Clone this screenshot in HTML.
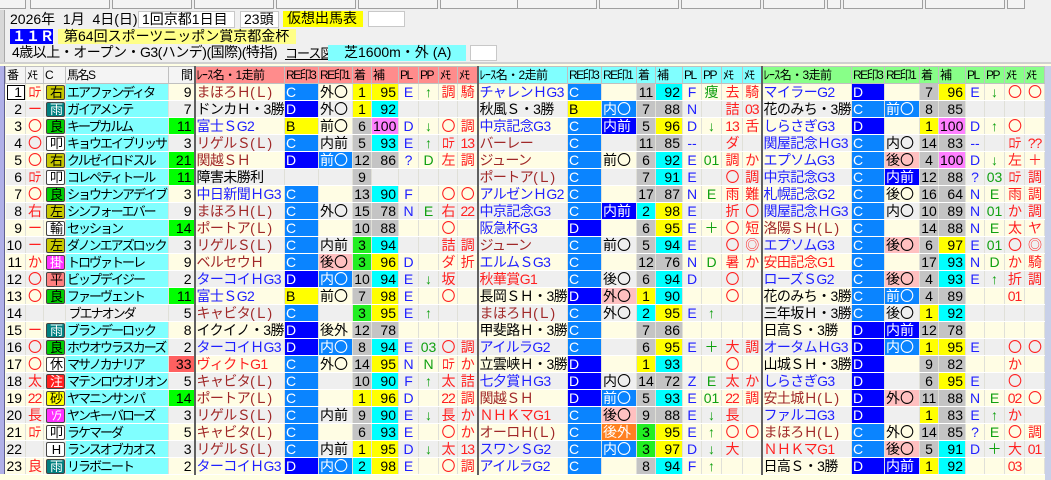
<!DOCTYPE html>
<html><head><meta charset="utf-8">
<style>
*{margin:0;padding:0;box-sizing:border-box}
body{width:1051px;height:480px;overflow:hidden;background:#ffffe4;font-family:"Liberation Sans","Noto Sans CJK JP",sans-serif;font-size:14px;position:relative}
.top{position:absolute;left:0;top:0;width:1051px;height:64px;background:#f0f0f0;border-bottom:2px solid #d0d0d0}
.tab{position:absolute;top:-2px;height:11px;border:1px solid #a0a0a0;background:#f4f4f4}
.gut{position:absolute;left:0;width:5px;background:#b0b0e8;border-right:1px solid #606090}
.ab{position:absolute;line-height:15px;white-space:nowrap}
.wb{background:#fff;border:1px solid #c8c8c8}
table{position:absolute;left:5px;top:66px;width:1039px;border-collapse:collapse;table-layout:fixed}
td{height:17px;max-height:17px;padding:0 1px;white-space:nowrap;overflow:hidden;border-right:1px solid #e0e0d8;border-bottom:1px solid #fff;line-height:15px;font-size:14px}
thead td{background:#f4f4f4;border:1px solid #c0c0c0;font-size:12px;letter-spacing:-1.5px;padding:0 1px}
thead td.p{background:#ff8c8c}thead td.q{background:#80ffff}thead td.s{background:#88ff88}
tbody tr:nth-child(odd){background:#fffde4}
tbody tr:nth-child(even){background:#efefef}
td:nth-child(1){text-align:right;padding-right:3px}
td:nth-child(2){color:#ff2020;text-align:center;letter-spacing:-1px}
td:nth-child(5),td:nth-child(10),td:nth-child(19),td:nth-child(28){text-align:right;padding-right:2px}
td:nth-child(9),td:nth-child(18),td:nth-child(27){text-align:center}
td:nth-child(11),td:nth-child(20),td:nth-child(29){color:#2020ff;text-align:center}
td:nth-child(12),td:nth-child(21),td:nth-child(30){color:#10a010;text-align:center}
td:nth-child(13),td:nth-child(14),td:nth-child(22),td:nth-child(23),td:nth-child(31),td:nth-child(32){color:#ff2020;text-align:center;letter-spacing:-1px}
thead td{color:#000 !important;text-align:left !important}
td.rn{border-left:2px solid #606060;letter-spacing:-0.6px}
tbody td.nm{background:#80ffff;font-size:13px;letter-spacing:-2px}
tbody td.nn{font-size:13px;letter-spacing:-2px}
.y{background:#ffff00}.c{background:#00ffff}.g{background:#22ee22}.gr{background:#c4c4c4}.m{background:#ff80ff}
.gn{background:#00ff00}.rd{background:#ff6060}
.C{background:#0a84ff;color:#fff}.D{background:#0000ff;color:#fff}.B{background:#ffff00}
.pk{background:#ffc0c0}.bl{background:#0a84ff;color:#fff}.db{background:#0000ff;color:#fff}.or{background:#ff8020;color:#fff}
.tb{color:#2020ff}.tm{color:#a02828}.tr{color:#ff2020}.tk{color:#000}
b{display:inline-block;width:19px;height:15px;font-weight:normal;font-size:13px;line-height:14px;text-align:center;border-radius:2px;border:1px solid #444;vertical-align:top;margin-left:1px;overflow:hidden;letter-spacing:-2px}
.ol{background:#c8c800}.te{background:#008080;color:#fff}.gb{background:#00cc00}.wh{background:#fff}.mg{background:#ff30ff;color:#fff}.sa{background:#ff8080}.re{background:#ff2020;color:#fff}.ye{background:#ffff00}
.sel{outline:1px solid #000;outline-offset:-2px;background:#fff}
.rs{position:absolute;left:1045px;top:66px;width:6px;height:414px;background:#c8d0e8}
</style></head><body>
<div class="top">
<div class="tab" style="left:-2px;width:28px"></div><div class="tab" style="left:30px;width:80px"></div><div class="tab" style="left:112px;width:80px"></div><div class="tab" style="left:194px;width:80px"></div><div class="tab" style="left:276px;width:80px"></div><div class="tab" style="left:358px;width:80px"></div><div class="tab" style="left:440px;width:80px"></div><div class="tab" style="left:517px;width:80px"></div><div class="tab" style="left:599px;width:80px"></div><div class="tab" style="left:681px;width:80px"></div><div class="tab" style="left:763px;width:62px"></div><div class="tab" style="left:827px;width:14px"></div><div class="tab" style="left:843px;width:80px"></div><div class="tab" style="left:925px;width:80px"></div><div class="tab" style="left:1007px;width:18px"></div>
<div class="gut" style="top:10px;height:52px;background:#d8d8d8;border-right:1px solid #aaa"></div>
<div class="ab" style="left:10px;top:12px">2026年&nbsp; 1月&nbsp; 4日(日)</div>
<div class="ab wb" style="left:138px;top:11px;width:97px;padding-left:3px">1回京都1日目</div>
<div class="ab wb" style="left:240px;top:11px;width:39px;padding-left:3px">23頭</div>
<div class="ab" style="left:283px;top:11px;width:80px;background:#ffff00;padding-left:4px;height:16px">仮想出馬表</div>
<div class="ab wb" style="left:368px;top:11px;width:37px;height:16px"></div>
<div class="ab" style="left:10px;top:29px;width:43px;background:#0000ff;color:#fff;padding-left:2px;font-weight:bold;height:15px">１１Ｒ</div>
<div class="ab" style="left:58px;top:29px;width:238px;background:#ffff88;padding-left:6px;height:15px">第64回スポーツニッポン賞京都金杯</div>
<div class="ab" style="left:12px;top:45px;letter-spacing:-0.5px">4歳以上・オープン・G3(ハンデ)(国際)(特指)</div>
<div class="ab" style="left:285px;top:46px;text-decoration:underline;font-size:13px;letter-spacing:-1px">コース図</div>
<div class="ab" style="left:328px;top:45px;width:138px;height:16px;background:#80ffff;padding-left:16px">芝1600m・外 (A)</div>
<div class="ab wb" style="left:470px;top:45px;width:27px;height:16px"></div>
</div>
<div class="gut" style="top:66px;height:408px"></div>
<div class="rs"></div>
<table>
<colgroup><col style="width:20px"><col style="width:18px"><col style="width:22px"><col style="width:103px"><col style="width:26px">
<col style="width:90px"><col style="width:34px"><col style="width:34px"><col style="width:19px"><col style="width:27px"><col style="width:20px"><col style="width:20px"><col style="width:19px"><col style="width:20px">
<col style="width:90px"><col style="width:34px"><col style="width:35px"><col style="width:19px"><col style="width:27px"><col style="width:19px"><col style="width:20px"><col style="width:21px"><col style="width:19px">
<col style="width:90px"><col style="width:33px"><col style="width:35px"><col style="width:19px"><col style="width:27px"><col style="width:19px"><col style="width:20px"><col style="width:20px"><col style="width:20px"></colgroup>
<thead><tr><td>番</td><td>ﾒﾓ</td><td>C</td><td>馬名S</td><td style="text-align:right!important">間</td>
<td class="p rn">ﾚｰｽ名・1走前</td><td class="p">RE印3</td><td class="p">RE印1</td><td class="p">着</td><td class="p">補</td><td class="p">PL</td><td class="p">PP</td><td class="p">ﾒﾓ</td><td class="p">ﾒﾓ</td>
<td class="q rn">ﾚｰｽ名・2走前</td><td class="q">RE印3</td><td class="q">RE印1</td><td class="q">着</td><td class="q">補</td><td class="q">PL</td><td class="q">PP</td><td class="q">ﾒﾓ</td><td class="q">ﾒﾓ</td>
<td class="s rn">ﾚｰｽ名・3走前</td><td class="s">RE印3</td><td class="s">RE印1</td><td class="s">着</td><td class="s">補</td><td class="s">PL</td><td class="s">PP</td><td class="s">ﾒﾓ</td><td class="s">ﾒﾓ</td></tr></thead>
<tbody>
<tr><td class="sel">1</td><td>ﾛﾃ</td><td><b class="ol">右</b></td><td class="nm">エアファンディタ</td><td>9</td><td class="rn tm">まほろＨ(Ｌ)</td><td class="C">C</td><td>外〇</td><td class="y">1</td><td class="y">95</td><td>E</td><td>↑</td><td>調</td><td>騎</td><td class="rn tb">チャレンＨG3</td><td class="C">C</td><td></td><td class="gr">11</td><td class="c">92</td><td>F</td><td>痩</td><td>去</td><td>騎</td><td class="rn tb">マイラーG2</td><td class="D">D</td><td></td><td class="gr">7</td><td class="y">96</td><td>E</td><td>↓</td><td>〇</td><td>〇</td></tr>
<tr><td>2</td><td>ー</td><td><b class="te">雨</b></td><td class="nm">ガイアメンテ</td><td>7</td><td class="rn tk">ドンカＨ・3勝</td><td class="D">D</td><td>外〇</td><td class="y">1</td><td class="c">92</td><td></td><td></td><td></td><td></td><td class="rn tk">秋風Ｓ・3勝</td><td class="B">B</td><td class="bl">内〇</td><td class="gr">7</td><td class="gr">88</td><td>N</td><td></td><td>詰</td><td>03</td><td class="rn tk">花のみち・3勝</td><td class="C">C</td><td class="bl">前〇</td><td class="gr">8</td><td class="gr">85</td><td></td><td></td><td></td><td></td></tr>
<tr><td>3</td><td>〇</td><td><b class="gb">良</b></td><td class="nm">キープカルム</td><td class="gn">11</td><td class="rn tb">富士ＳG2</td><td class="B">B</td><td>前〇</td><td class="gr">6</td><td class="m">100</td><td>D</td><td>↓</td><td>〇</td><td>調</td><td class="rn tb">中京記念G3</td><td class="C">C</td><td class="db">内前</td><td class="gr">5</td><td class="y">96</td><td>D</td><td>↓</td><td>13</td><td>舌</td><td class="rn tb">しらさぎG3</td><td class="D">D</td><td></td><td class="y">1</td><td class="m">100</td><td>D</td><td>↑</td><td>〇</td><td></td></tr>
<tr><td>4</td><td>〇</td><td><b class="wh">叩</b></td><td class="nm">キョウエイブリッサ</td><td>3</td><td class="rn tm">リゲルＳ(Ｌ)</td><td class="C">C</td><td>内前</td><td class="gr">5</td><td class="c">93</td><td>E</td><td>↑</td><td>ﾛﾃ</td><td>13</td><td class="rn tm">バーレー</td><td class="C">C</td><td></td><td class="gr">11</td><td class="gr">85</td><td>--</td><td></td><td>ダ</td><td></td><td class="rn tb">関屋記念ＨG3</td><td class="C">C</td><td>内〇</td><td class="gr">14</td><td class="gr">83</td><td>--</td><td></td><td>ﾛﾃ</td><td>??</td></tr>
<tr><td>5</td><td>〇</td><td><b class="ol">右</b></td><td class="nm">クルゼイロドスル</td><td class="gn">21</td><td class="rn tm">関越ＳＨ</td><td class="D">D</td><td class="bl">前〇</td><td class="gr">12</td><td class="gr">86</td><td>?</td><td>D</td><td>左</td><td>調</td><td class="rn tm">ジューン</td><td class="C">C</td><td>前〇</td><td class="gr">6</td><td class="c">92</td><td>E</td><td>01</td><td>調</td><td>か</td><td class="rn tb">エプソムG3</td><td class="C">C</td><td class="pk">後〇</td><td class="gr">4</td><td class="m">100</td><td>D</td><td>↓</td><td>左</td><td>＋</td></tr>
<tr><td>6</td><td>ﾛﾃ</td><td><b class="wh">叩</b></td><td class="nm">コレペティトール</td><td class="gn">11</td><td class="rn tk">障害未勝利</td><td></td><td></td><td class="gr">9</td><td></td><td></td><td></td><td></td><td></td><td class="rn tm">ポートア(Ｌ)</td><td class="C">C</td><td></td><td class="gr">7</td><td class="c">91</td><td>E</td><td></td><td>〇</td><td>調</td><td class="rn tb">中京記念G3</td><td class="C">C</td><td class="db">内前</td><td class="gr">12</td><td class="gr">88</td><td>?</td><td>03</td><td>ﾛﾃ</td><td>調</td></tr>
<tr><td>7</td><td>〇</td><td><b class="gb">良</b></td><td class="nm">ショウナンアデイブ</td><td>3</td><td class="rn tb">中日新聞ＨG3</td><td class="C">C</td><td></td><td class="gr">13</td><td class="c">90</td><td>F</td><td></td><td>〇</td><td>〇</td><td class="rn tb">アルゼンＨG2</td><td class="C">C</td><td></td><td class="gr">17</td><td class="gr">87</td><td>N</td><td>E</td><td>雨</td><td>難</td><td class="rn tb">札幌記念G2</td><td class="C">C</td><td>後〇</td><td class="gr">16</td><td class="gr">64</td><td>N</td><td>E</td><td>雨</td><td>調</td></tr>
<tr><td>8</td><td>右</td><td><b class="ol">左</b></td><td class="nm">シンフォーエバー</td><td>9</td><td class="rn tm">まほろＨ(Ｌ)</td><td class="C">C</td><td>外〇</td><td class="gr">15</td><td class="gr">78</td><td>N</td><td>E</td><td>右</td><td>22</td><td class="rn tb">中京記念G3</td><td class="C">C</td><td class="db">内前</td><td class="c">2</td><td class="y">98</td><td>E</td><td></td><td>折</td><td>〇</td><td class="rn tb">関屋記念ＨG3</td><td class="C">C</td><td>内〇</td><td class="gr">10</td><td class="gr">89</td><td>N</td><td>01</td><td>か</td><td>調</td></tr>
<tr><td>9</td><td>ー</td><td><b class="wh">輸</b></td><td class="nm">セッション</td><td class="gn">14</td><td class="rn tm">ポートア(Ｌ)</td><td class="C">C</td><td></td><td class="gr">10</td><td class="gr">88</td><td></td><td></td><td>〇</td><td></td><td class="rn tb">阪急杯G3</td><td class="D">D</td><td></td><td class="gr">6</td><td class="y">95</td><td>E</td><td>＋</td><td>〇</td><td>短</td><td class="rn tm">洛陽ＳＨ(Ｌ)</td><td class="C">C</td><td></td><td class="gr">14</td><td class="gr">88</td><td>N</td><td>E</td><td>太</td><td>ヤ</td></tr>
<tr><td>10</td><td>ー</td><td><b class="ol">左</b></td><td class="nm">ダノンエアズロック</td><td>3</td><td class="rn tm">リゲルＳ(Ｌ)</td><td class="C">C</td><td>内前</td><td class="g">3</td><td class="c">94</td><td></td><td></td><td>詰</td><td>調</td><td class="rn tm">ジューン</td><td class="C">C</td><td>前〇</td><td class="gr">5</td><td class="c">94</td><td>E</td><td></td><td>〇</td><td>◎</td><td class="rn tb">エプソムG3</td><td class="C">C</td><td class="pk">後〇</td><td class="gr">6</td><td class="y">97</td><td>E</td><td>01</td><td>〇</td><td>◎</td></tr>
<tr><td>11</td><td>か</td><td><b class="mg">掛</b></td><td class="nm">トロヴァトーレ</td><td>9</td><td class="rn tm">ベルセウＨ</td><td class="C">C</td><td class="pk">後〇</td><td class="g">3</td><td class="y">96</td><td>D</td><td></td><td>ダ</td><td>折</td><td class="rn tb">エルムＳG3</td><td class="C">C</td><td></td><td class="gr">12</td><td class="gr">76</td><td>N</td><td>D</td><td>暑</td><td>か</td><td class="rn tr">安田記念G1</td><td class="C">C</td><td></td><td class="gr">17</td><td class="c">93</td><td>N</td><td>D</td><td>か</td><td>騎</td></tr>
<tr><td>12</td><td>〇</td><td><b class="sa">平</b></td><td class="nm">ビップデイジー</td><td>2</td><td class="rn tb">ターコイＨG3</td><td class="D">D</td><td class="bl">内〇</td><td class="gr">10</td><td class="c">94</td><td>E</td><td>↓</td><td>坂</td><td></td><td class="rn tr">秋華賞G1</td><td class="C">C</td><td>後〇</td><td class="gr">6</td><td class="c">94</td><td>D</td><td></td><td>〇</td><td></td><td class="rn tb">ローズＳG2</td><td class="C">C</td><td class="pk">後〇</td><td class="gr">4</td><td class="c">93</td><td>E</td><td>↑</td><td>折</td><td>調</td></tr>
<tr><td>13</td><td>〇</td><td><b class="gb">良</b></td><td class="nm">ファーヴェント</td><td class="gn">11</td><td class="rn tb">富士ＳG2</td><td class="B">B</td><td>前〇</td><td class="gr">7</td><td class="y">98</td><td>E</td><td></td><td>〇</td><td></td><td class="rn tk">長岡ＳＨ・3勝</td><td class="D">D</td><td class="pk">外〇</td><td class="y">1</td><td class="c">90</td><td></td><td></td><td>〇</td><td></td><td class="rn tk">花のみち・3勝</td><td class="C">C</td><td class="bl">前〇</td><td class="gr">4</td><td class="gr">89</td><td></td><td></td><td>01</td><td></td></tr>
<tr><td>14</td><td></td><td></td><td class="nn">&nbsp;ブエナオンダ</td><td>5</td><td class="rn tm">キャビタ(Ｌ)</td><td class="C">C</td><td></td><td class="g">3</td><td class="y">95</td><td>E</td><td>↑</td><td></td><td></td><td class="rn tm">まほろＨ(Ｌ)</td><td class="C">C</td><td>外〇</td><td class="c">2</td><td class="y">95</td><td>E</td><td>↑</td><td></td><td></td><td class="rn tk">三年坂Ｈ・3勝</td><td class="C">C</td><td>後〇</td><td class="y">1</td><td class="c">92</td><td></td><td></td><td></td><td></td></tr>
<tr><td>15</td><td>ー</td><td><b class="te">雨</b></td><td class="nm">ブランデーロック</td><td>8</td><td class="rn tk">イクイノ・3勝</td><td class="D">D</td><td>後外</td><td class="gr">12</td><td class="gr">78</td><td></td><td></td><td></td><td></td><td class="rn tk">甲斐路Ｈ・3勝</td><td class="C">C</td><td></td><td class="gr">7</td><td class="gr">86</td><td></td><td></td><td></td><td></td><td class="rn tk">日高Ｓ・3勝</td><td class="D">D</td><td class="db">内前</td><td class="gr">12</td><td class="gr">78</td><td></td><td></td><td></td><td></td></tr>
<tr><td>16</td><td>〇</td><td><b class="gb">良</b></td><td class="nm">ホウオウラスカーズ</td><td>2</td><td class="rn tb">ターコイＨG3</td><td class="D">D</td><td class="bl">内〇</td><td class="gr">8</td><td class="c">94</td><td>E</td><td>03</td><td>〇</td><td>調</td><td class="rn tb">アイルラG2</td><td class="C">C</td><td></td><td class="gr">6</td><td class="y">95</td><td>E</td><td>＋</td><td>大</td><td>調</td><td class="rn tb">オータムＨG3</td><td class="D">D</td><td class="bl">内〇</td><td class="y">1</td><td class="y">95</td><td>E</td><td></td><td>〇</td><td>〇</td></tr>
<tr><td>17</td><td>〇</td><td><b class="wh">休</b></td><td class="nm">マサノカナリア</td><td class="rd">33</td><td class="rn tr">ヴィクトG1</td><td class="C">C</td><td>外〇</td><td class="gr">14</td><td class="y">95</td><td>N</td><td>N</td><td>ﾛﾃ</td><td>か</td><td class="rn tk">立雲峡Ｈ・3勝</td><td class="D">D</td><td></td><td class="y">1</td><td class="c">93</td><td></td><td></td><td>〇</td><td></td><td class="rn tk">山城ＳＨ・3勝</td><td class="D">D</td><td></td><td class="gr">9</td><td class="gr">82</td><td></td><td></td><td>か</td><td></td></tr>
<tr><td>18</td><td>太</td><td><b class="re">注</b></td><td class="nm">マテンロウオリオン</td><td>5</td><td class="rn tm">キャビタ(Ｌ)</td><td class="C">C</td><td></td><td class="gr">10</td><td class="c">90</td><td>F</td><td>↑</td><td>太</td><td>詰</td><td class="rn tb">七夕賞ＨG3</td><td class="D">D</td><td>内〇</td><td class="gr">14</td><td class="gr">72</td><td>Z</td><td>E</td><td>太</td><td>か</td><td class="rn tb">しらさぎG3</td><td class="D">D</td><td></td><td class="gr">6</td><td class="y">95</td><td>E</td><td></td><td>〇</td><td></td></tr>
<tr><td>19</td><td>22</td><td><b class="ye">砂</b></td><td class="nm">ヤマニンサンパ</td><td class="gn">14</td><td class="rn tm">ポートア(Ｌ)</td><td class="C">C</td><td></td><td class="y">1</td><td class="y">96</td><td>D</td><td></td><td>22</td><td>調</td><td class="rn tm">関越ＳＨ</td><td class="D">D</td><td class="bl">前〇</td><td class="gr">5</td><td class="c">93</td><td>E</td><td>01</td><td>22</td><td>調</td><td class="rn tm">安土城Ｈ(Ｌ)</td><td class="D">D</td><td class="pk">外〇</td><td class="gr">11</td><td class="gr">88</td><td>N</td><td>E</td><td>02</td><td>〇</td></tr>
<tr><td>20</td><td>長</td><td><b class="mg">ｿﾗ</b></td><td class="nm">ヤンキーバローズ</td><td>3</td><td class="rn tm">リゲルＳ(Ｌ)</td><td class="C">C</td><td>内前</td><td class="gr">9</td><td class="c">90</td><td>E</td><td>↓</td><td>長</td><td>か</td><td class="rn tr">ＮＨＫマG1</td><td class="C">C</td><td class="pk">後〇</td><td class="gr">9</td><td class="gr">88</td><td>E</td><td>↓</td><td>長</td><td></td><td class="rn tb">ファルコG3</td><td class="D">D</td><td></td><td class="y">1</td><td class="gr">83</td><td>E</td><td>↑</td><td>か</td><td></td></tr>
<tr><td>21</td><td>ﾛﾃ</td><td><b class="wh">叩</b></td><td class="nm">ラケマーダ</td><td>5</td><td class="rn tm">キャビタ(Ｌ)</td><td class="C">C</td><td></td><td class="gr">6</td><td class="c">93</td><td>E</td><td></td><td>〇</td><td>か</td><td class="rn tm">オーロＨ(Ｌ)</td><td class="C">C</td><td class="or">後外</td><td class="g">3</td><td class="y">95</td><td>E</td><td>↑</td><td>〇</td><td>〇</td><td class="rn tm">まほろＨ(Ｌ)</td><td class="C">C</td><td>外〇</td><td class="gr">14</td><td class="gr">85</td><td>?</td><td>E</td><td>〇</td><td>調</td></tr>
<tr><td>22</td><td></td><td><b class="wh">H</b></td><td class="nm">ランスオブカオス</td><td>3</td><td class="rn tm">リゲルＳ(Ｌ)</td><td class="C">C</td><td>内前</td><td class="y">1</td><td class="y">95</td><td>D</td><td>↓</td><td>太</td><td>13</td><td class="rn tb">スワンＳG2</td><td class="C">C</td><td class="bl">内〇</td><td class="g">3</td><td class="y">97</td><td>D</td><td>↓</td><td>大</td><td></td><td class="rn tr">ＮＨＫマG1</td><td class="C">C</td><td class="pk">後〇</td><td class="gr">5</td><td class="c">91</td><td>D</td><td>＋</td><td>大</td><td>01</td></tr>
<tr><td>23</td><td>良</td><td><b class="te">雨</b></td><td class="nm">リラボニート</td><td>2</td><td class="rn tb">ターコイＨG3</td><td class="D">D</td><td class="bl">内〇</td><td class="c">2</td><td class="y">98</td><td>E</td><td></td><td>〇</td><td>調</td><td class="rn tb">アイルラG2</td><td class="C">C</td><td></td><td class="gr">8</td><td class="c">94</td><td>F</td><td>↑</td><td></td><td></td><td class="rn tk">日高Ｓ・3勝</td><td class="D">D</td><td class="db">内前</td><td class="y">1</td><td class="c">92</td><td></td><td></td><td>03</td><td></td></tr>
</tbody></table>
</body></html>
